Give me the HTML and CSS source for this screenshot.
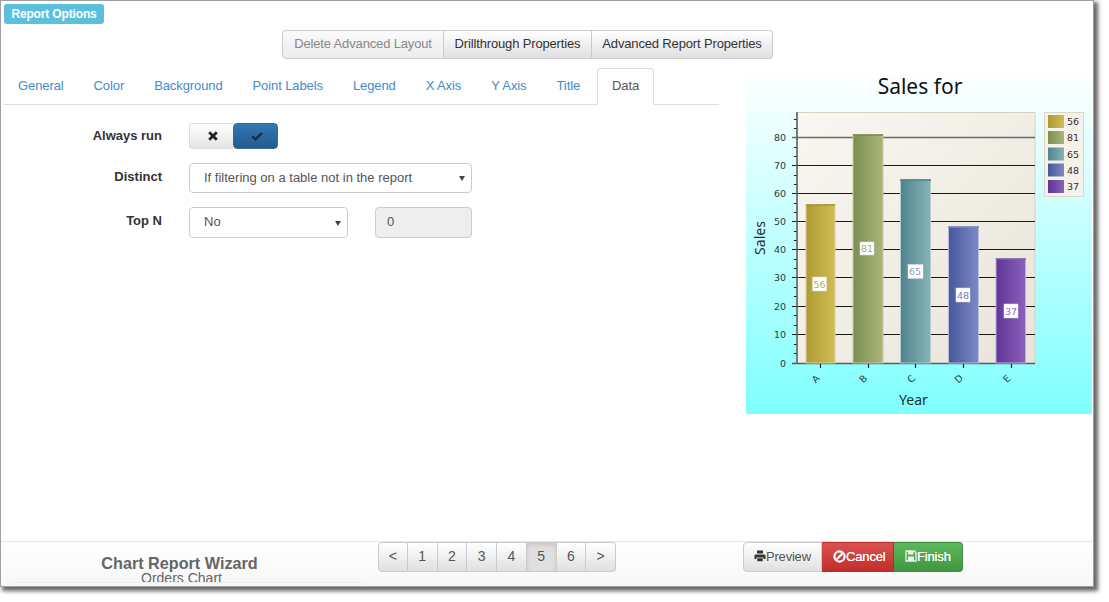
FILE: index.html
```html
<!DOCTYPE html>
<html lang="en">
<head>
<meta charset="utf-8">
<title>Chart Report Wizard</title>
<link rel="stylesheet" href="styles.css">
</head>
<body>
<div class="window">
  <div class="badge-row"><span class="badge">Report Options</span></div>
  <div class="toolbar">
    <button class="btn btn-disabled">Delete Advanced Layout</button>
    <button class="btn">Drillthrough Properties</button>
    <button class="btn">Advanced Report Properties</button>
  </div>
  <div class="main">
    <div class="left">
      <ul class="tabs">
        <li><a>General</a></li>
        <li><a>Color</a></li>
        <li><a>Background</a></li>
        <li><a>Point Labels</a></li>
        <li><a>Legend</a></li>
        <li><a>X Axis</a></li>
        <li><a>Y Axis</a></li>
        <li><a>Title</a></li>
        <li class="active"><a>Data</a></li>
      </ul>
      <div class="form">
        <label class="lbl lbl-first">Always run</label>
        <div class="toggle">
          <span class="tg tg-off"><svg class="ic" viewBox="0 0 12 12"><path d="M2.200 2.200 9.800 9.800M9.800 2.200 2.200 9.800" fill="none" stroke="#222" stroke-width="2.800"/></svg></span>
          <span class="tg tg-on"><svg class="ic" viewBox="0 0 12 12"><path d="M1.200 6.200 4.600 9.400 10.800 3" fill="none" stroke="#1c2b3a" stroke-width="2.400"/></svg></span>
        </div>
        <label class="lbl">Distinct</label>
        <div class="sel sel-wide"><select><option>If filtering on a table not in the report</option></select></div>
        <label class="lbl lbl-last">Top N</label>
        <div class="topn">
          <div class="sel sel-small"><select><option>No</option></select></div>
          <input class="num" value="0" disabled>
        </div>
      </div>
    </div>
    <svg class="chart" viewBox="746 70 346 344" width="346" height="344">
      <defs>
        <linearGradient id="bg" x1="0" y1="0" x2="0" y2="1"><stop offset="0" stop-color="#fff"/><stop offset="1" stop-color="#7fffff"/></linearGradient>
        <linearGradient id="plot" x1="0" y1="0" x2="1" y2="1"><stop offset="0" stop-color="#f9f7f1"/><stop offset="1" stop-color="#e8e4d9"/></linearGradient>
        <linearGradient id="a"><stop offset="0" stop-color="#af9a32"/><stop offset="1" stop-color="#cfbe55"/></linearGradient>
        <linearGradient id="b"><stop offset="0" stop-color="#7d8d50"/><stop offset="1" stop-color="#a9b678"/></linearGradient>
        <linearGradient id="c"><stop offset="0" stop-color="#4f838d"/><stop offset="1" stop-color="#88b3b7"/></linearGradient>
        <linearGradient id="d"><stop offset="0" stop-color="#47579b"/><stop offset="1" stop-color="#7c89c6"/></linearGradient>
        <linearGradient id="e"><stop offset="0" stop-color="#5f3596"/><stop offset="1" stop-color="#8a61bc"/></linearGradient>
      </defs>
      <rect x="746" y="70" width="346" height="344" fill="url(#bg)"/>
      <text class="t-title" x="920" y="94" text-anchor="middle">Sales for</text>
      <rect x="797" y="112.500" width="238" height="251" fill="url(#plot)" stroke="#d5d1bd"/>
      <g stroke="#1a1a1a" stroke-width="1.200">
        <path stroke="#6a6a6a" stroke-width="1.600" d="M792 137.500H1035"/>
        <path d="M792 165.500H1035M792 193.500H1035M792 221.500H1035M792 249.500H1035M792 277.500H1035M792 306.500H1035M792 334.500H1035"/>
        <path d="M794 119.500h3M794 128.500h3M794 147.500h3M794 156.500h3M794 175.500h3M794 184.500h3M794 203.500h3M794 212.500h3M794 231.500h3M794 240.500h3M794 259.500h3M794 268.500h3M794 287.500h3M794 296.500h3M794 315.500h3M794 325.500h3M794 344.500h3M794 353.500h3"/>
        <path d="M820.500 363v5M868.500 363v5M915.500 363v5M963.500 363v5M1011.500 363v5"/>
      </g>
      <path d="M797 112V363.500M792 363.500H1035" stroke="#4f5f60" stroke-width="1.500" fill="none"/>
      <g stroke-width="1">
        <rect x="806" y="204.500" width="29" height="158.500" fill="url(#a)" stroke="#d8d3a8"/>
        <rect x="853" y="134.500" width="30" height="228.500" fill="url(#b)" stroke="#c9ccaa"/>
        <rect x="900.500" y="179.500" width="30" height="183.500" fill="url(#c)" stroke="#b5cccb"/>
        <rect x="948.500" y="226.500" width="30" height="136.500" fill="url(#d)" stroke="#b9bdd8"/>
        <rect x="996" y="258.500" width="29.500" height="104.500" fill="url(#e)" stroke="#bfaed4"/>
      </g>
      <path d="M806 205H835" stroke="#a69230" stroke-width="1.500"/>
      <path d="M853 135H883" stroke="#798a4c" stroke-width="1.500"/>
      <path d="M900 180H931" stroke="#4d818b" stroke-width="1.500"/>
      <path d="M948 227H979" stroke="#7c89c6" stroke-width="1.500"/>
      <path d="M996 259H1026" stroke="#7e63ab" stroke-width="1.500"/>
      <g fill="#fff" stroke="#ddd" stroke-width="0.500">
        <rect x="812.500" y="277" width="14" height="14"/>
        <rect x="860" y="242" width="14" height="13"/>
        <rect x="908" y="264.500" width="15" height="14"/>
        <rect x="956" y="288" width="14" height="14"/>
        <rect x="1004" y="304" width="14" height="14"/>
      </g>
      <g class="t-num" text-anchor="middle">
        <text x="819.500" y="287.500" fill="#c0ad50">56</text>
        <text x="867" y="252" fill="#a3af72">81</text>
        <text x="915" y="275" fill="#7fa8ad">65</text>
        <text x="963" y="298.500" fill="#7480be">48</text>
        <text x="1011" y="314.500" fill="#9570c0">37</text>
      </g>
      <g class="t-num" text-anchor="end" fill="#2b3a3a">
        <text x="786" y="140.500">80</text><text x="786" y="169">70</text><text x="786" y="197">60</text><text x="786" y="225">50</text><text x="786" y="253">40</text><text x="786" y="281">30</text><text x="786" y="309.500">20</text><text x="786" y="338">10</text><text x="786" y="366.500">0</text>
      </g>
      <g class="t-num" text-anchor="middle" fill="#2b3a3a">
        <text transform="translate(816 379) rotate(-45)" x="0" y="3">A</text>
        <text transform="translate(863.500 379) rotate(-45)" x="0" y="3">B</text>
        <text transform="translate(911.500 379) rotate(-45)" x="0" y="3">C</text>
        <text transform="translate(959 379) rotate(-45)" x="0" y="3">D</text>
        <text transform="translate(1007 379) rotate(-45)" x="0" y="3">E</text>
      </g>
      <text class="t-axis" x="913.500" y="405" text-anchor="middle">Year</text>
      <text class="t-axis" transform="translate(764.500 238) rotate(-90)" text-anchor="middle">Sales</text>
      <rect x="1044.500" y="112.500" width="39" height="84" fill="#f5f2ea" stroke="#dcd8c8"/>
      <rect x="1048" y="115" width="16" height="13" fill="url(#a)"/>
      <rect x="1048" y="131" width="16" height="13" fill="url(#b)"/>
      <rect x="1048" y="147.500" width="16" height="13" fill="url(#c)"/>
      <rect x="1048" y="163.500" width="16" height="13" fill="url(#d)"/>
      <rect x="1048" y="180" width="16" height="13" fill="url(#e)"/>
      <g class="t-num" fill="#3a2a2a">
        <text x="1067" y="125">56</text><text x="1067" y="141">81</text><text x="1067" y="157.500">65</text><text x="1067" y="173.500">48</text><text x="1067" y="190">37</text>
      </g>
    </svg>
  </div>
  <div class="footer">
    <div class="title-block">
      <div class="wiz">Chart Report Wizard</div>
      <div class="sub">Orders Chart</div>
    </div>
    <div class="pager">
      <button class="btn pg">&lt;</button>
      <button class="btn pg">1</button>
      <button class="btn pg">2</button>
      <button class="btn pg">3</button>
      <button class="btn pg">4</button>
      <button class="btn pg pg-active">5</button>
      <button class="btn pg">6</button>
      <button class="btn pg">&gt;</button>
    </div>
    <div class="actions">
      <button class="btn act"><svg class="ic" viewBox="0 0 12 12"><path fill="#333" d="M3 0.500H9V3.500H3ZM1.500 4.500H10.500Q11.500 4.500 11.500 5.500V9H9.500V7.500H2.500V9H0.500V5.500Q0.500 4.500 1.500 4.500ZM3.300 8.300H8.700V11.300H3.300Z"/></svg>Preview</button>
      <button class="btn act act-red"><svg class="ic ic-ban" viewBox="0 0 12 12"><circle cx="6" cy="6" r="4.700" fill="none" stroke="#fff" stroke-width="2"/><path d="M2.800 9.200 9.200 2.800" stroke="#fff" stroke-width="2"/></svg>Cancel</button>
      <button class="btn act act-green"><svg class="ic" viewBox="0 0 12 12"><path fill="none" stroke="#e8f5e8" stroke-width="1.300" d="M1 1H9.500L11 2.500V11H1Z"/><path fill="#e8f5e8" d="M3 1H8.500V4.500H3ZM3 6.500H9V11H3Z"/></svg>Finish</button>
    </div>
  </div>
</div>
</body>
</html>
```
FILE: styles.css
```css
* { box-sizing: border-box; }
html, body { margin: 0; height: 100%; background: #fff; overflow: hidden; }
body { font-family: "Liberation Sans", Arial, sans-serif; font-size: 13px; color: #333; }

.window {
  width: 1094px;
  height: 587px;
  border: 1px solid #a0a0a0;
  background: #fff;
  display: flex;
  flex-direction: column;
  box-shadow: 3px 3px 4px 1px #666;
}

.badge-row { padding: 3px 0 0 3px; height: 23px; }
.badge {
  display: block;
  width: 100px;
  height: 20px;
  background: #5bc0de;
  border-radius: 3px;
  color: #fff;
  font-weight: bold;
  font-size: 12px;
  letter-spacing: -0.150px;
  line-height: 20px;
  text-align: center;
}

.btn {
  font: 13px "Liberation Sans", Arial, sans-serif;
  height: 30px;
  padding: 0 11px;
  margin: 0;
  border: 1px solid #ccc;
  border-left-width: 0;
  background: linear-gradient(#fff, #e0e0e0);
  color: #333;
  white-space: nowrap;
}
.btn:first-child { border-left-width: 1px; border-radius: 4px 0 0 4px; }
.btn:last-child { border-radius: 0 4px 4px 0; }

.toolbar { display: flex; padding-left: 281px; margin-top: 6px; height: 29px; }
.toolbar .btn { height: 29px; padding: 0 0 2px; letter-spacing: -0.150px; }
.toolbar .btn:nth-child(1) { width: 162px; }
.toolbar .btn:nth-child(2) { width: 148px; }
.toolbar .btn:nth-child(3) { width: 181px; }
.btn-disabled { color: #888; background: linear-gradient(#fafafa, #ececec); }

.main { flex: 1; display: flex; min-height: 0; }
.left { width: 718px; padding: 9px 0 0 3px; }
.chart { display: block; margin: 11px 0 0 27px; flex: none; }

.tabs {
  list-style: none;
  display: flex;
  margin: 0;
  padding: 0 0 0 0;
  height: 37px;
  border-bottom: 1px solid #ddd;
  letter-spacing: -0.100px;
}
.tabs a {
  display: block;
  height: 37px;
  padding: 0 15px;
  line-height: 35px;
  color: #428bca;
}
.tabs li:first-child a { padding-left: 14px; }
.tabs li.active { margin-left: 2px; }
.tabs li.active a {
  color: #555;
  background: #fff;
  border: 1px solid #ddd;
  border-bottom-color: #fff;
  border-radius: 4px 4px 0 0;
  padding: 0 14px;
  line-height: 33px;
}

.form {
  display: grid;
  grid-template-columns: 158px 1fr;
  column-gap: 27px;
  row-gap: 14px;
  align-items: center;
  margin-top: 18px;
}
.lbl { font-weight: bold; text-align: right; padding-bottom: 3px; color: #333; }
.lbl-first { padding-bottom: 1px; }
.lbl-last { padding-bottom: 5px; }

.toggle {
  display: flex;
  width: 89px;
  height: 26px;
  border-radius: 4px;
}
.tg { width: 45px; display: flex; align-items: center; justify-content: center; border: 1px solid #ddd; }
.tg-off { background: linear-gradient(#fff, #e4e4e4); border-radius: 4px 0 0 4px; border-right: 0; padding-left: 2px; }
.tg-on { background: linear-gradient(#2f78b6, #265a8c); border-color: #2e6da4; border-radius: 4px; padding-left: 3px; }
.ic { width: 12px; height: 12px; display: inline-block; vertical-align: -1px; }
.ic-ban { width: 13px; height: 13px; vertical-align: -2px; }

.sel { position: relative; }
.sel select {
  appearance: none;
  width: 100%;
  height: 100%;
  font: 13px "Liberation Sans", Arial, sans-serif;
  color: #555;
  background: #fff;
  border: 1px solid #ccc;
  border-radius: 4px;
  padding: 0 14px 2px;
}
.sel::after {
  content: "";
  position: absolute;
  right: 7px;
  top: 50%;
  margin-top: -2px;
  border: 3px solid transparent;
  border-top: 5px solid #444;
  border-bottom: 0;
}
.sel-wide { width: 283px; height: 30px; }
.sel-small { width: 159px; height: 31px; }
.topn { display: flex; gap: 27px; }
.num {
  width: 97px;
  height: 31px;
  background: #eee;
  border: 1px solid #ccc;
  border-radius: 4px;
  padding: 0 11px 2px;
  font: 13px "Liberation Sans", Arial, sans-serif;
  color: #555;
}

.footer {
  height: 45px;
  flex: none;
  display: flex;
  border-top: 1px solid #e5e5e5;
  background: linear-gradient(#fff, #f7f7f7);
  position: relative;
  overflow: hidden;
}
.title-block {
  width: 377px;
  padding: 12px 20px 0 0;
  text-align: center;
  color: #666;
  flex: none;
}
.title-block::after {
  content: "";
  position: absolute;
  left: 8px;
  width: 354px;
  top: 40px;
  height: 10px;
  border: 1px solid #eee;
  border-radius: 4px;
}
.wiz { font-size: 16.200px; font-weight: bold; line-height: 18px; }
.sub { font-size: 14px; line-height: 14px; padding-left: 4px; margin-top: -1px; }

.pager { display: flex; height: 30px; flex: none; }
.pg { width: 29.750px; padding: 0 0 2px; color: #555; font-size: 14px; }
.pg-active { background: #e0e0e0; box-shadow: inset 0 2px 4px rgba(0,0,0,.12); }

.actions { display: flex; height: 30px; margin-left: 127px; }
.act { padding: 0 0 2px 11px; text-align: left; }
.act:nth-child(1) { width: 79px; color: #555; padding-left: 10px; letter-spacing: -0.200px; }
.act-red {
  width: 72px;
  background: linear-gradient(#d9534f, #c12e2a);
  border-color: #b92c28;
  color: #fff;
  padding-left: 11px;
  letter-spacing: -0.150px;
  text-shadow: 0 0 .6px #fff;
}
.act-green {
  width: 69px;
  background: linear-gradient(#5cb85c, #419641);
  border-color: #3e8f3e;
  color: #fff;
  padding-left: 11px;
  letter-spacing: -0.150px;
  text-shadow: 0 0 .6px #fff;
}

.t-title { font: 21px "Noto Sans", sans-serif; fill: #111; }
.t-num { font: 9.500px "DejaVu Sans", sans-serif; }
.t-axis { font: 14px "Noto Sans", sans-serif; fill: #1f2f2f; }
```
